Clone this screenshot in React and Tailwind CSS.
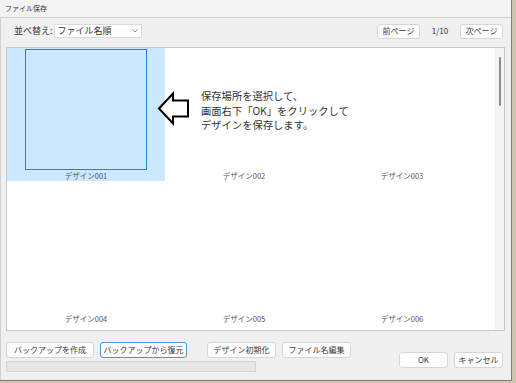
const designs = ["001", "002", "003", "004", "005", "006"];

function Btn({ children, className = "", focus }) {
  return (
    <button
      className={`flex items-center justify-center rounded-[3px] border bg-[#fdfdfd] text-[8px] text-[#3a3a3a] ${
        focus ? "border-[#4b93dd]" : "border-[#d6d6d6]"
      } ${className}`}
    >
      {children}
    </button>
  );
}

function DesignCell({ id, selected }) {
  return (
    <div
      className={`flex h-[133px] flex-col items-center ${
        selected ? "bg-[#cce8ff]" : ""
      }`}
    >
      <div className="mt-[1px] h-[121px] w-[122px]">
        {selected && (
          <div className="h-full w-full border-[1.5px] border-[#2a7fd4] bg-[#cce8ff]" />
        )}
      </div>
      <div className="mt-[1px] text-[7.5px] leading-[9px] text-[#555]">
        デザイン{id}
      </div>
    </div>
  );
}

function App() {
  return (
    <div
      className="h-[383px] w-[516px] overflow-hidden bg-[#cfc6b2]"
      style={{ fontFamily: '"Noto Sans CJK JP", "Noto Sans", sans-serif' }}
    >
      <div className="flex h-[381px] w-[512px] flex-col border-r border-b border-[#7d7d7d] bg-[#f0f0f0]">
        <div className="flex h-[17px] items-center bg-[#f3f3f3] px-[5px] text-[7px] text-[#333]">
          ファイル保存
        </div>
        <div className="flex flex-1 flex-col border-l border-t border-[#cfcfcf] px-[5px]">
          <div className="mt-[5px] flex h-[16px] items-center">
            <span className="ml-[8px] text-[9px] text-[#333]">並べ替え:</span>
            <div className="ml-[1px] flex h-[14px] w-[88px] items-center justify-between border border-[#dadada] bg-white px-[3px] text-[9px] text-[#333]">
              <span>ファイル名順</span>
              <svg width="6" height="4" viewBox="0 0 6 4">
                <path d="M0.5 0.5 L3 3 L5.5 0.5" fill="none" stroke="#666" strokeWidth="0.8" />
              </svg>
            </div>
            <div className="flex-1" />
            <Btn className="h-[15px] w-[43px]">前ページ</Btn>
            <span className="w-[40px] text-center text-[8px] text-[#333]">1/10</span>
            <Btn className="mr-[3px] h-[15px] w-[43px]">次ページ</Btn>
          </div>

          <div className="relative mt-[8px] flex h-[284px] w-[499px] border border-[#c9c9c9] bg-white">
            <div className="grid flex-1 grid-cols-[158px_158px_158px] content-start gap-y-[10px]">
              {designs.map((d, i) => (
                <DesignCell key={d} id={d} selected={i === 0} />
              ))}
            </div>
            <div className="flex w-[9px] justify-center bg-[#f4f4f4] pt-[9px]">
              <div className="h-[49px] w-[2px] rounded-full bg-[#8c8c8c]" />
            </div>

            <svg
              className="absolute left-[150px] top-[43px]"
              width="36"
              height="36"
              viewBox="0 0 36 36"
            >
              <polygon
                points="2,17.5 16,2.5 16,9.5 31,9.5 31,25.5 16,25.5 16,32.5"
                fill="white"
                stroke="black"
                strokeWidth="2"
                strokeLinejoin="miter"
              />
            </svg>
            <div className="absolute left-[194px] top-[41px] text-[10.3px] leading-[14.5px] text-[#333]">
              <div>保存場所を選択して、</div>
              <div>画面右下「OK」をクリックして</div>
              <div>デザインを保存します。</div>
            </div>
          </div>

          <div className="mt-[11px] flex">
            <div className="flex flex-col">
              <div className="flex h-[16px] gap-[6px]">
                <Btn className="w-[88px]">バックアップを作成</Btn>
                <Btn className="w-[87px]" focus>
                  バックアップから復元
                </Btn>
                <Btn className="ml-[14px] w-[69px]">デザイン初期化</Btn>
                <Btn className="w-[69px]">ファイル名編集</Btn>
              </div>
              <div className="mt-[3px] h-[11px] w-[250px] border border-[#d3d3d3] bg-[#e6e6e6]" />
            </div>
            <div className="flex-1" />
            <div className="mr-[3px] mt-[10px] flex h-[16px] gap-[6px]">
              <Btn className="w-[49px]">OK</Btn>
              <Btn className="w-[49px]">キャンセル</Btn>
            </div>
          </div>
        </div>
      </div>
    </div>
  );
}

export default App;
